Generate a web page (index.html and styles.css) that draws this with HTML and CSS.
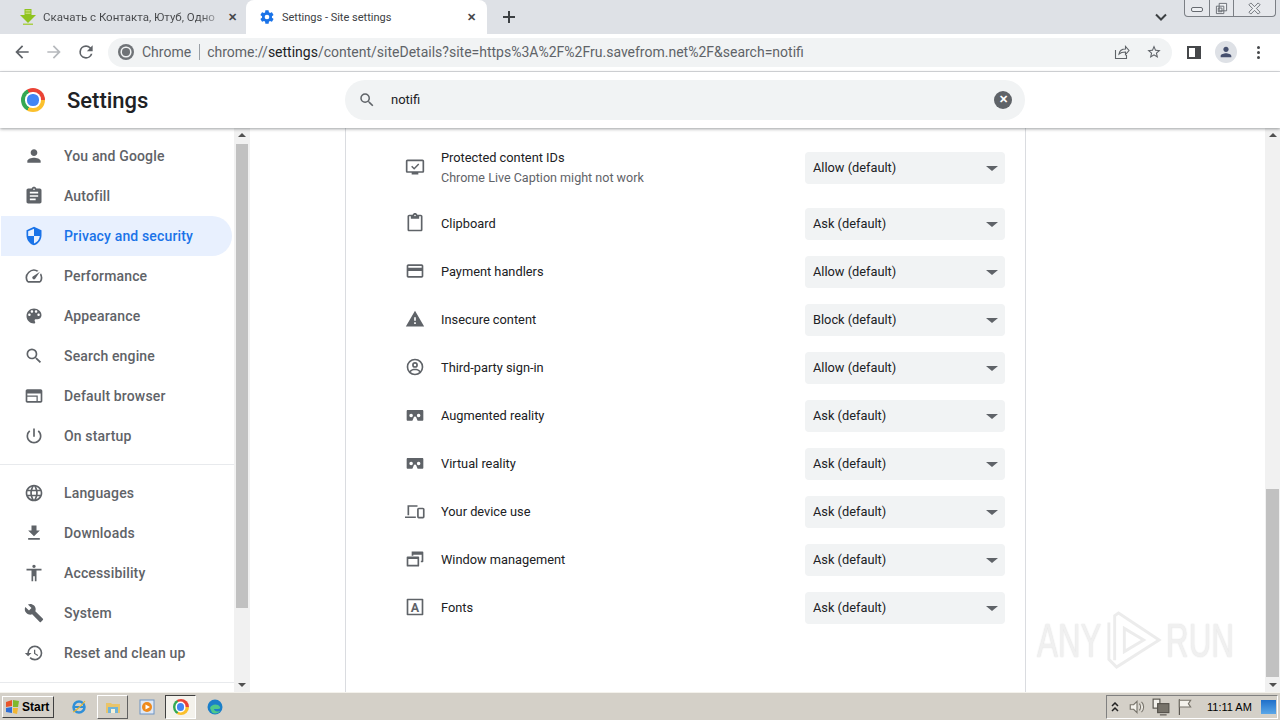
FILE: index.html
```html
<!DOCTYPE html>
<html lang="en">
<head>
    <meta charset="UTF-8">
    <title>Settings - Site settings</title>
    <link rel="stylesheet" href="styles.css">
</head>
<body>
<div class="window">

    <!-- Tabs -->
    <div class="tabstrip">
        <div class="tab">
            <svg class="tab-icon" viewBox="0 0 16 16"><path fill="#8fc31f" d="M4.500 0h7v6H16l-8 8-8-8h4.500z"/><path fill="#c3dc6a" d="M5.500 1h5v1.500h-5zM5.500 3.500h5V5h-5z"/><rect fill="#a9cf4a" x="3" y="14.500" width="10" height="1.500"/></svg>
            <span class="tab-title fade">Скачать с Контакта, Ютуб, Одно</span>
            <span class="tab-close">&#10005;</span>
        </div>
        <div class="tab active">
            <svg class="tab-icon" viewBox="0 0 24 24"><path fill="#1a73e8" d="M19.4 13c.04-.32.1-.66.1-1s-.06-.68-.1-1l2.1-1.65c.2-.15.24-.42.12-.64l-2-3.46c-.12-.22-.38-.3-.6-.22l-2.5 1c-.52-.4-1.08-.73-1.7-.98l-.37-2.65A.49.49 0 0 0 14 2h-4c-.25 0-.46.18-.5.42l-.37 2.65c-.62.25-1.18.58-1.7.98l-2.5-1c-.22-.08-.48 0-.6.22l-2 3.46c-.12.22-.08.49.12.64L4.55 11c-.04.32-.1.66-.1 1s.06.68.1 1l-2.1 1.65c-.2.15-.24.42-.12.64l2 3.46c.12.22.38.3.6.22l2.5-1c.52.4 1.08.73 1.7.98l.37 2.65c.04.24.25.42.5.42h4c.25 0 .46-.18.5-.42l.37-2.65c.62-.25 1.18-.58 1.7-.98l2.5 1c.22.08.48 0 .6-.22l2-3.46c.12-.22.08-.49-.12-.64L19.4 13zM12 15.5a3.5 3.5 0 1 1 0-7 3.5 3.5 0 0 1 0 7z"/></svg>
            <span class="tab-title">Settings - Site settings</span>
            <span class="tab-close">&#10005;</span>
        </div>
        <svg class="new-tab" viewBox="0 0 14 14"><path d="M6 1h2v5h5v2H8v5H6V8H1V6h5z"/></svg>
        <svg class="tab-menu" viewBox="0 0 12 8"><path d="M1 1.5l5 5 5-5" fill="none" stroke="#3c4043" stroke-width="2"/></svg>
        <div class="win-controls">
            <div class="win-btn"><span class="win-min"></span></div>
            <div class="win-btn narrow">
                <svg viewBox="0 0 14 14"><path fill="#eef0f3" stroke="#666a70" d="M4.500 1.500h8v8h-8zM1.500 4.500h8v8h-8z"/><path fill="none" stroke="#666a70" d="M3.500 6.500h4v4h-4z"/></svg>
            </div>
            <div class="win-btn wide">
                <svg viewBox="0 0 14 14"><path fill="#eef0f3" stroke="#666a70" d="M1 3l2-2 4 4 4-4 2 2-4 4 4 4-2 2-4-4-4 4-2-2 4-4z"/></svg>
            </div>
        </div>
    </div>

    <!-- Toolbar -->
    <div class="toolbar">
        <svg class="nav-icon" viewBox="0 0 24 24"><path fill="#5f6368" d="M20 11H7.83l5.59-5.59L12 4l-8 8 8 8 1.41-1.41L7.83 13H20z"/></svg>
        <svg class="nav-icon" viewBox="0 0 24 24"><path fill="#b6b9bd" d="M4 11h12.17l-5.59-5.59L12 4l8 8-8 8-1.41-1.41L16.17 13H4z"/></svg>
        <svg class="nav-icon" viewBox="0 0 24 24"><path fill="#5f6368" d="M17.65 6.35A7.96 7.96 0 0 0 12 4a8 8 0 1 0 7.73 10h-2.08A6 6 0 1 1 12 6c1.66 0 3.14.69 4.22 1.78L13 11h7V4z"/></svg>
        <div class="omnibox">
            <span class="chrome-mark small gray"></span>
            <span class="omni-scheme">Chrome</span>
            <span class="omni-sep"></span>
            <span class="omni-url">chrome://<b>settings</b>/content/siteDetails?site=https%3A%2F%2Fru.savefrom.net%2F&amp;search=notifi</span>
            <svg class="omni-icon" viewBox="0 0 16 16"><path fill="none" stroke="#5f6368" stroke-width="1.1" d="M1.5 6v8.5h11V11M5 10c.5-3 3-5 6.500-5V2.500l3.500 4-3.500 4V8C8.500 8 6.500 8.500 5 10z"/></svg>
            <svg class="omni-icon" viewBox="0 0 24 24"><path fill="#5f6368" d="M22 9.240l-7.190-.620L12 2 9.190 8.630 2 9.240l5.460 4.730L5.820 21 12 17.270 18.180 21l-1.630-7.030L22 9.240zM12 15.400l-3.760 2.270 1-4.280-3.320-2.880 4.380-.38L12 6.100l1.710 4.040 4.380.38-3.320 2.880 1 4.280L12 15.400z"/></svg>
        </div>
        <span class="side-panel"></span>
        <span class="avatar">
            <svg viewBox="0 0 24 24"><path fill="#46506e" d="M12 12c2.210 0 4-1.790 4-4s-1.790-4-4-4-4 1.790-4 4 1.790 4 4 4zm0 2c-2.670 0-8 1.340-8 4v2h16v-2c0-2.660-5.330-4-8-4z"/></svg>
        </span>
        <span class="kebab"><i></i><i></i><i></i></span>
    </div>

    <!-- Cabecalho de Settings -->
    <div class="settings-head">
        <span class="chrome-mark"></span>
        <h1>Settings</h1>
        <div class="search">
            <svg viewBox="0 0 24 24"><path d="M15.500 14h-.790l-.280-.270A6.470 6.470 0 0 0 16 9.500 6.500 6.500 0 1 0 9.500 16c1.610 0 3.090-.590 4.230-1.570l.270.280v.790l5 4.990L20.490 19l-4.990-5zm-6 0C7.010 14 5 11.990 5 9.500S7.010 5 9.500 5 14 7.010 14 9.500 11.990 14 9.500 14z"/></svg>
            <span class="search-text">notifi</span>
            <span class="search-clear">&#10005;</span>
        </div>
    </div>

    <div class="content">
        <!-- Menu lateral -->
        <nav class="sidebar">
            <a class="nav-item"><svg viewBox="0 0 24 24"><path d="M12 12c2.210 0 4-1.790 4-4s-1.790-4-4-4-4 1.790-4 4 1.790 4 4 4zm0 2c-2.670 0-8 1.340-8 4v2h16v-2c0-2.660-5.330-4-8-4z"/></svg>You and Google</a>
            <a class="nav-item"><svg viewBox="0 0 24 24"><path d="M19 3h-4.180C14.400 1.840 13.300 1 12 1c-1.300 0-2.400.840-2.820 2H5c-1.100 0-2 .9-2 2v14c0 1.100.9 2 2 2h14c1.100 0 2-.9 2-2V5c0-1.100-.9-2-2-2zm-7 0c.550 0 1 .450 1 1s-.450 1-1 1-1-.450-1-1 .450-1 1-1zm2 14H7v-2h7v2zm3-4H7v-2h10v2zm0-4H7V7h10v2z"/></svg>Autofill</a>
            <a class="nav-item selected"><svg viewBox="0 0 24 24"><path d="M12 1L3 5v6c0 5.550 3.840 10.740 9 12 5.160-1.260 9-6.450 9-12V5l-9-4zm0 10.990h7c-.530 4.120-3.280 7.790-7 8.940V12H5V6.300l7-3.110v8.800z"/></svg>Privacy and security</a>
            <a class="nav-item"><svg viewBox="0 0 24 24"><path d="M20.380 8.570l-1.230 1.850a8 8 0 0 1-.220 7.580H5.070A8 8 0 0 1 15.580 6.850l1.850-1.230A10 10 0 0 0 3.350 19a2 2 0 0 0 1.720 1h13.850a2 2 0 0 0 1.740-1 10 10 0 0 0-.270-10.440zm-9.790 6.840a2 2 0 0 0 2.830 0l5.660-8.490-8.490 5.660a2 2 0 0 0 0 2.830z"/></svg>Performance</a>
            <a class="nav-item"><svg viewBox="0 0 24 24"><path d="M12 3c-4.970 0-9 4.030-9 9s4.030 9 9 9c.830 0 1.500-.670 1.500-1.500 0-.390-.150-.740-.390-1.010-.230-.260-.380-.610-.380-.990 0-.830.670-1.500 1.500-1.500H16c2.760 0 5-2.240 5-5 0-4.420-4.030-8-9-8zm-5.500 9c-.830 0-1.500-.670-1.500-1.500S5.670 9 6.500 9 8 9.670 8 10.500 7.330 12 6.500 12zm3-4C8.670 8 8 7.330 8 6.500S8.670 5 9.500 5s1.500.670 1.500 1.500S10.330 8 9.500 8zm5 0c-.830 0-1.500-.670-1.500-1.500S13.670 5 14.500 5s1.500.670 1.500 1.500S15.330 8 14.500 8zm3 4c-.830 0-1.500-.670-1.500-1.500S16.670 9 17.500 9s1.500.670 1.500 1.500-.670 1.500-1.500 1.500z"/></svg>Appearance</a>
            <a class="nav-item"><svg viewBox="0 0 24 24"><path d="M15.500 14h-.790l-.280-.270A6.470 6.470 0 0 0 16 9.500 6.500 6.500 0 1 0 9.500 16c1.610 0 3.090-.590 4.230-1.570l.270.280v.790l5 4.990L20.490 19l-4.990-5zm-6 0C7.010 14 5 11.990 5 9.500S7.010 5 9.500 5 14 7.010 14 9.500 11.990 14 9.500 14z"/></svg>Search engine</a>
            <a class="nav-item"><svg viewBox="0 0 24 24"><path d="M20 4H4c-1.100 0-2 .9-2 2v12c0 1.100.9 2 2 2h16c1.100 0 2-.9 2-2V6c0-1.100-.9-2-2-2zM4 18v-5h11v5H4zm11-6.500H4V9h16v9h-3.500V11.500H15z"/></svg>Default browser</a>
            <a class="nav-item"><svg viewBox="0 0 24 24"><path d="M13 3h-2v10h2V3zm4.830 2.170l-1.420 1.420A6.920 6.920 0 0 1 19 12c0 3.870-3.130 7-7 7s-7-3.130-7-7c0-2.190 1.010-4.140 2.580-5.420L6.170 5.170A8.930 8.930 0 0 0 3 12c0 4.970 4.030 9 9 9s9-4.030 9-9c0-2.740-1.230-5.180-3.170-6.830z"/></svg>On startup</a>
            <div class="nav-divider"></div>
            <a class="nav-item"><svg viewBox="0 0 24 24"><path d="M11.990 2C6.470 2 2 6.480 2 12s4.470 10 9.990 10C17.520 22 22 17.520 22 12S17.520 2 11.990 2zm6.930 6h-2.950a15.650 15.650 0 0 0-1.380-3.560A8.030 8.030 0 0 1 18.920 8zM12 4.040c.830 1.200 1.480 2.530 1.910 3.960h-3.820c.430-1.430 1.080-2.760 1.910-3.960zM4.260 14C4.100 13.360 4 12.690 4 12s.1-1.360.26-2h3.380c-.080.660-.140 1.320-.140 2s.060 1.340.140 2H4.260zm.820 2h2.950c.320 1.250.780 2.450 1.380 3.560A7.990 7.990 0 0 1 5.080 16zm2.950-8H5.080a7.990 7.990 0 0 1 4.330-3.560A15.650 15.650 0 0 0 8.030 8zM12 19.960c-.830-1.200-1.480-2.530-1.910-3.960h3.820c-.430 1.430-1.080 2.760-1.910 3.960zM14.340 14H9.660c-.090-.660-.160-1.320-.160-2s.070-1.350.160-2h4.680c.090.650.160 1.320.160 2s-.070 1.340-.160 2zm.250 5.560c.6-1.110 1.060-2.310 1.380-3.560h2.950a8.030 8.030 0 0 1-4.330 3.560zM16.360 14c.080-.660.140-1.320.140-2s-.060-1.340-.140-2h3.380c.160.640.260 1.310.260 2s-.1 1.360-.260 2h-3.380z"/></svg>Languages</a>
            <a class="nav-item"><svg viewBox="0 0 24 24"><path d="M19 9h-4V3H9v6H5l7 7 7-7zM5 18v2h14v-2H5z"/></svg>Downloads</a>
            <a class="nav-item"><svg viewBox="0 0 24 24"><path d="M12 2c1.100 0 2 .9 2 2s-.9 2-2 2-2-.9-2-2 .9-2 2-2zm9 7h-6v13h-2v-6h-2v6H9V9H3V7h18v2z"/></svg>Accessibility</a>
            <a class="nav-item"><svg viewBox="0 0 24 24"><path d="M22.700 19l-9.100-9.100c.9-2.300.4-5-1.500-6.900-2-2-5-2.400-7.400-1.300L9 6 6 9 1.600 4.700C.4 7.100.9 10.100 2.900 12.100c1.900 1.900 4.600 2.400 6.900 1.500l9.100 9.100c.4.4 1 .4 1.400 0l2.300-2.300c.5-.4.5-1.100.1-1.400z"/></svg>System</a>
            <a class="nav-item"><svg viewBox="0 0 24 24"><path d="M13 3a9 9 0 0 0-9 9H1l3.890 3.890.070.140L9 12H6c0-3.870 3.130-7 7-7s7 3.130 7 7-3.130 7-7 7c-1.930 0-3.680-.790-4.940-2.060l-1.420 1.420A8.960 8.960 0 0 0 13 21a9 9 0 0 0 0-18zm-1 5v5l4.280 2.540.720-1.210-3.500-2.080V8H12z"/></svg>Reset and clean up</a>
            <div class="nav-divider bottom"></div>
        </nav>
        <div class="scrollbar side">
            <span class="sb-up"></span>
            <span class="sb-gap-top"></span>
            <span class="sb-thumb"></span>
            <span class="sb-down"></span>
        </div>

        <!-- Lista de permissoes -->
        <main class="main">
            <section class="card">
                <div class="perm tall">
                    <svg viewBox="0 0 24 24"><path d="M21 3H3c-1.100 0-2 .9-2 2v12c0 1.100.9 2 2 2h5v2h8v-2h5c1.100 0 2-.9 2-2V5c0-1.100-.9-2-2-2zm0 14H3V5h18v12z"/><path d="M8 11l3 3 5.500-5.500" fill="none" stroke="#5f6368" stroke-width="1.800"/></svg>
                    <div class="perm-label">Protected content IDs<small>Chrome Live Caption might not work</small></div>
                    <div class="select">Allow (default)<span class="caret"></span></div>
                </div>
                <div class="perm">
                    <svg viewBox="0 0 24 24"><path d="M19 2h-4.180C14.400.840 13.300 0 12 0c-1.300 0-2.400.840-2.820 2H5c-1.100 0-2 .9-2 2v16c0 1.100.9 2 2 2h14c1.100 0 2-.9 2-2V4c0-1.100-.9-2-2-2zm-7 0c.550 0 1 .450 1 1s-.450 1-1 1-1-.450-1-1 .450-1 1-1zm7 18H5V4h2v3h10V4h2v16z"/></svg>
                    <div class="perm-label">Clipboard</div>
                    <div class="select">Ask (default)<span class="caret"></span></div>
                </div>
                <div class="perm">
                    <svg viewBox="0 0 24 24"><path d="M20 4H4c-1.110 0-2 .890-2 2v12c0 1.110.890 2 2 2h16c1.110 0 2-.890 2-2V6c0-1.110-.890-2-2-2zm0 14H4v-6h16v6zm0-10H4V6h16v2z"/></svg>
                    <div class="perm-label">Payment handlers</div>
                    <div class="select">Allow (default)<span class="caret"></span></div>
                </div>
                <div class="perm">
                    <svg viewBox="0 0 24 24"><path d="M1 21h22L12 2 1 21zm12-3h-2v-2h2v2zm0-4h-2v-4h2v4z"/></svg>
                    <div class="perm-label">Insecure content</div>
                    <div class="select">Block (default)<span class="caret"></span></div>
                </div>
                <div class="perm">
                    <svg viewBox="0 0 24 24"><path d="M12 2a10 10 0 1 0 0 20 10 10 0 0 0 0-20zm0 18a7.960 7.960 0 0 1-5.210-1.940C8.120 16.500 10 16 12 16s3.880.5 5.210 2.060A7.960 7.960 0 0 1 12 20zm6.600-3.350C16.900 14.700 14.500 14 12 14s-4.900.7-6.600 2.650A7.960 7.960 0 0 1 4 12c0-4.410 3.590-8 8-8s8 3.590 8 8c0 1.730-.550 3.340-1.400 4.650zM12 6a3.500 3.500 0 1 0 0 7 3.500 3.500 0 0 0 0-7zm0 5a1.500 1.500 0 1 1 0-3 1.500 1.500 0 0 1 0 3z"/></svg>
                    <div class="perm-label">Third-party sign-in</div>
                    <div class="select">Allow (default)<span class="caret"></span></div>
                </div>
                <div class="perm">
                    <svg viewBox="0 0 24 24"><path d="M20.740 6H3.210C2.550 6 2 6.570 2 7.280v10.440c0 .7.550 1.280 1.230 1.280h4.790c.520 0 .960-.330 1.140-.790l1.400-3.480c.230-.590.790-1.010 1.440-1.010s1.210.420 1.450 1.010l1.390 3.480c.190.460.630.790 1.110.790h4.790c.710 0 1.260-.580 1.260-1.280V7.280c0-.710-.550-1.280-1.260-1.280zM7.500 14.620a2.130 2.130 0 1 1 0-4.250 2.130 2.130 0 0 1 0 4.250zm9 0a2.130 2.130 0 1 1 0-4.250 2.130 2.130 0 0 1 0 4.250z"/></svg>
                    <div class="perm-label">Augmented reality</div>
                    <div class="select">Ask (default)<span class="caret"></span></div>
                </div>
                <div class="perm">
                    <svg viewBox="0 0 24 24"><path d="M20.740 6H3.210C2.550 6 2 6.570 2 7.280v10.440c0 .7.550 1.280 1.230 1.280h4.790c.520 0 .960-.330 1.140-.790l1.400-3.480c.230-.590.790-1.010 1.440-1.010s1.210.420 1.450 1.010l1.390 3.480c.190.460.630.790 1.110.790h4.790c.710 0 1.260-.580 1.260-1.280V7.280c0-.710-.550-1.280-1.260-1.280zM7.500 14.620a2.130 2.130 0 1 1 0-4.250 2.130 2.130 0 0 1 0 4.250zm9 0a2.130 2.130 0 1 1 0-4.250 2.130 2.130 0 0 1 0 4.250z"/></svg>
                    <div class="perm-label">Virtual reality</div>
                    <div class="select">Ask (default)<span class="caret"></span></div>
                </div>
                <div class="perm">
                    <svg viewBox="0 0 24 24"><path fill="none" stroke="#5f6368" stroke-width="2" d="M4 17V6h11M0 19.500h13"/><rect x="15.500" y="9" width="7" height="11" rx="1" fill="none" stroke="#5f6368" stroke-width="2"/></svg>
                    <div class="perm-label">Your device use</div>
                    <div class="select">Ask (default)<span class="caret"></span></div>
                </div>
                <div class="perm">
                    <svg viewBox="0 0 24 24"><path d="M8 3h13a1 1 0 0 1 1 1v11a1 1 0 0 1-1 1h-2v-2h1V7H10v1H8z"/><path d="M3 9h13a1 1 0 0 1 1 1v10a1 1 0 0 1-1 1H3a1 1 0 0 1-1-1V10a1 1 0 0 1 1-1zm1 3v7h11v-7z" fill-rule="evenodd"/></svg>
                    <div class="perm-label">Window management</div>
                    <div class="select">Ask (default)<span class="caret"></span></div>
                </div>
                <div class="perm">
                    <svg viewBox="0 0 24 24"><path fill-rule="evenodd" d="M3 2h18a1 1 0 0 1 1 1v18a1 1 0 0 1-1 1H3a1 1 0 0 1-1-1V3a1 1 0 0 1 1-1zm1 2v16h16V4z"/><text x="12" y="18" class="icon-letter">A</text></svg>
                    <div class="perm-label">Fonts</div>
                    <div class="select">Ask (default)<span class="caret"></span></div>
                </div>
            </section>
        </main>
        <div class="scrollbar page">
            <span class="sb-up"></span>
            <span class="sb-gap-page"></span>
            <span class="sb-thumb"></span>
            <span class="sb-down"></span>
        </div>

        <!-- Marca d'agua -->
        <div class="watermark">
            <span>ANY</span>
            <svg viewBox="0 0 60 64"><path fill="none" stroke="#ececec" stroke-width="3" d="M4 14v38l8 8 44-28L14 4l-4 3v46M20 20v24l20-12z"/></svg>
            <span>RUN</span>
        </div>
    </div>

    <!-- Barra de tarefas -->
    <div class="taskbar">
        <div class="start">
            <svg viewBox="0 0 16 16"><path fill="#e8552b" d="M1 3l6-2v6l-6 1z"/><path fill="#7fb82e" d="M8 1l6 1-1 6H8z"/><path fill="#2f6fd6" d="M1 9l6-1v6l-6-1z"/><path fill="#f2b632" d="M8 9h5l-1 6-4-1z"/></svg>
            Start
        </div>
        <div class="task-icon">
            <svg viewBox="0 0 16 16"><circle cx="8" cy="8" r="5.500" fill="none" stroke="#2f8fd8" stroke-width="2.500"/><path d="M3 7h10v2H3z" fill="#2f8fd8"/><path d="M2 13c3-1 9-7 12-11" fill="none" stroke="#e6b62e" stroke-width="1.200"/></svg>
        </div>
        <div class="task-icon raised">
            <svg viewBox="0 0 16 16"><path fill="#e9c46a" d="M1 4h5l1 1h8v9H1z"/><path fill="#6fb3d9" d="M3 8h10v6H3z"/><path fill="#f7f2d8" d="M6 10h4v4H6z"/></svg>
        </div>
        <div class="task-icon">
            <svg viewBox="0 0 16 16"><rect x="1" y="1" width="14" height="14" fill="#dfe8f5" stroke="#6d94c4"/><circle cx="8" cy="8" r="5" fill="#ee8a1d"/><path d="M6.500 5.500L11 8l-4.500 2.500z" fill="#fff"/></svg>
        </div>
        <div class="task-icon pressed"><span class="chrome-mark small"></span></div>
        <div class="task-icon">
            <svg viewBox="0 0 16 16"><circle cx="8" cy="8" r="7.500" fill="#1b7fc9"/><path d="M3 9c1-4 8-5 10-1 .5 1 0 2-2 2H7c0 2 3 3 6 2-2 3-6 3-8 1.500" fill="#4ec98b"/></svg>
        </div>
        <div class="tray">
            <svg class="tray-up" viewBox="0 0 8 10"><path d="M1 4l3-3 3 3M1 9l3-3 3 3" fill="none" stroke="#222" stroke-width="1.500"/></svg>
            <svg viewBox="0 0 16 16"><path d="M2 6h3l3-3v10l-3-3H2zM10 5c1.500 1.500 1.500 4.500 0 6M12 3.500c2.500 2.500 2.500 6.500 0 9" fill="#f4f2ec" stroke="#77736a"/></svg>
            <svg viewBox="0 0 16 16"><rect x="1" y="1" width="6" height="8" fill="#f4f2ec" stroke="#55524b"/><rect x="5" y="5" width="10" height="8" fill="#77736a" stroke="#55524b"/><path d="M7 15h6" stroke="#55524b"/></svg>
            <svg viewBox="0 0 16 16"><path d="M3 1v14" stroke="#55524b"/><path d="M3 2h10l-2 3 2 3H3z" fill="#f4f2ec" stroke="#77736a"/></svg>
            <span class="clock">11:11 AM</span>
            <span class="show-desktop"></span>
        </div>
    </div>
</div>
</body>
</html>
```

FILE: styles.css
```css
/* Estilos gerais */
* {
    box-sizing: border-box;
}

body {
    margin: 0;
    font-family: Roboto, "Liberation Sans", sans-serif;
    font-size: 12.8px;
    color: #202124;
    background: #fff;
}

.window {
    display: flex;
    flex-direction: column;
    width: 1280px;
    height: 720px;
    overflow: hidden;
}

/* Abas */
.tabstrip {
    display: flex;
    align-items: flex-end;
    height: 34px;
    padding-left: 8px;
    background: #dee1e6;
}

.tab {
    display: flex;
    align-items: center;
    width: 238px;
    height: 34px;
    padding: 0 8px 0 12px;
    font-size: 11px;
    color: #45474a;
}

.tab.active {
    width: 241px;
    background: #fff;
    border-radius: 8px 8px 0 0;
    color: #3c4043;
    padding: 0 10px 0 13px;
}

.tab-icon {
    flex: none;
    width: 16px;
    height: 16px;
    margin-right: 7px;
}

.tab-title {
    flex: 1;
    white-space: nowrap;
}

.tab-title.fade {
    font-size: 11.5px;
    color: transparent;
    background: linear-gradient(90deg, #45474a 86%, #dee1e6 100%);
    -webkit-background-clip: text;
    background-clip: text;
}

.tab-close {
    flex: none;
    width: 12px;
    font-size: 11px;
    font-weight: 700;
    color: #45474a;
    text-align: center;
}

.new-tab {
    align-self: center;
    width: 14px;
    height: 14px;
    margin-left: 15px;
    fill: #3c4043;
}

.tab-menu {
    align-self: center;
    width: 12px;
    height: 8px;
    margin-left: 639px;
}

.win-controls {
    display: flex;
    align-self: flex-start;
    height: 17px;
    margin-left: 17px;
    background: #e6e8ec;
    border: 1px solid #7b7f85;
    border-top: 0;
    border-radius: 0 0 4px 4px;
}

.win-btn {
    display: flex;
    align-items: center;
    justify-content: center;
    width: 25px;
    border-right: 1px solid #7b7f85;
}

.win-btn.narrow {
    width: 24px;
}

.win-btn.wide {
    width: 41px;
    border-right: 0;
}

.win-btn svg {
    width: 13px;
    height: 13px;
}

.win-min {
    width: 12px;
    height: 5px;
    margin-top: 3px;
    border: 1px solid #666a70;
    border-radius: 2px;
    background: #eef0f3;
}

/* Barra de endereco */
.toolbar {
    display: flex;
    align-items: center;
    height: 38px;
    padding: 0 11px 1px 12px;
    border-bottom: 1px solid #dadce0;
}

.nav-icon {
    flex: none;
    width: 20px;
    height: 20px;
    margin-right: 12px;
}

.omnibox {
    display: flex;
    align-items: center;
    width: 1064px;
    height: 29px;
    padding: 0 10px 0 10px;
    background: #f1f3f4;
    border-radius: 15px;
    font-size: 14px;
    color: #5f6368;
}

.omni-scheme {
    margin-left: 8px;
}

.omni-sep {
    width: 1px;
    height: 16px;
    margin: 0 7px 0 8px;
    background: #9aa0a6;
}

.omni-url {
    flex: 1;
    white-space: nowrap;
    overflow: hidden;
}

.omni-url b {
    font-weight: 400;
    color: #202124;
}

.omni-icon {
    flex: none;
    width: 16px;
    height: 16px;
    margin-left: 16px;
}

.side-panel {
    flex: none;
    width: 14px;
    height: 13px;
    margin-left: 15px;
    border: 2px solid #45474a;
    border-right-width: 6px;
}

.avatar {
    display: flex;
    flex: none;
    align-items: center;
    justify-content: center;
    width: 22px;
    height: 22px;
    margin-left: 14px;
    background: #dee1e6;
    border-radius: 50%;
}

.avatar svg {
    width: 16px;
    height: 16px;
}

.kebab {
    display: flex;
    flex-direction: column;
    flex: none;
    gap: 2px;
    margin-left: 20px;
}

.kebab i {
    width: 3px;
    height: 3px;
    background: #45474a;
    border-radius: 50%;
}

/* Logo do Chrome */
.chrome-mark {
    position: relative;
    flex: none;
    width: 24px;
    height: 24px;
    border-radius: 50%;
    background: conic-gradient(#ea4335 0 90deg, #fbc02d 90deg 210deg, #34a853 210deg 330deg, #ea4335 330deg);
}

.chrome-mark::after {
    content: "";
    position: absolute;
    inset: 27%;
    border-radius: 50%;
    background: #4285f4;
    box-shadow: 0 0 0 2px #fff;
}

.chrome-mark.small {
    width: 16px;
    height: 16px;
}

.chrome-mark.small::after {
    box-shadow: 0 0 0 1.5px #fff;
}

.chrome-mark.gray {
    background: #6f7377;
}

.chrome-mark.gray::after {
    background: #6f7377;
    box-shadow: 0 0 0 1.5px #f1f3f4;
}

/* Cabecalho */
.settings-head {
    position: relative;
    z-index: 2;
    display: flex;
    align-items: center;
    flex: none;
    height: 56px;
    padding-left: 21px;
    background: #fff;
    box-shadow: 0 1px 3px rgba(60, 64, 67, 0.5);
}

.settings-head h1 {
    width: 278px;
    margin: 0 0 0 22px;
    font-size: 22px;
    font-weight: 500;
    color: #202124;
}

.search {
    display: flex;
    align-items: center;
    width: 680px;
    height: 40px;
    padding: 0 13px;
    background: #f1f3f4;
    border-radius: 20px;
}

.search svg {
    width: 18px;
    height: 18px;
    fill: #5f6368;
}

.search-text {
    flex: 1;
    margin: 0 0 2px 15px;
    font-size: 13px;
}

.search-clear {
    width: 18px;
    height: 18px;
    background: #5f6368;
    border-radius: 50%;
    color: #fff;
    font-size: 11px;
    font-weight: 700;
    line-height: 18px;
    text-align: center;
}

/* Conteudo */
.content {
    position: relative;
    display: flex;
    flex: 1;
    min-height: 0;
}

.sidebar {
    display: flex;
    flex-direction: column;
    flex: none;
    width: 234px;
    padding-top: 8px;
}

.nav-item {
    display: flex;
    align-items: center;
    flex: none;
    height: 40px;
    width: 231px;
    margin-left: 1px;
    padding-left: 23px;
    gap: 20px;
    font-size: 14px;
    font-weight: 500;
    letter-spacing: 0.15px;
    color: #5f6368;
    border-radius: 0 20px 20px 0;
}

.nav-item svg {
    flex: none;
    width: 20px;
    height: 20px;
    fill: #5f6368;
}

.nav-item.selected {
    background: #e8f0fe;
    color: #1a73e8;
}

.nav-item.selected svg {
    fill: #1a73e8;
}

.nav-divider {
    flex: none;
    height: 1px;
    margin: 8px 0 8px;
    background: #e8eaed;
}

.nav-divider.bottom {
    margin-top: 9px;
}

/* Barras de rolagem */
.scrollbar {
    display: flex;
    flex-direction: column;
    flex: none;
    background: #f1f1f1;
}

.scrollbar.side {
    width: 16px;
    padding: 0 2px;
}

.scrollbar.page {
    width: 15px;
    padding: 0 1px;
}

.sb-up,
.sb-down {
    flex: none;
    align-self: center;
    width: 0;
    height: 0;
    margin: 5px 0;
    border-left: 4px solid transparent;
    border-right: 4px solid transparent;
}

.sb-up {
    border-bottom: 4px solid #505050;
}

.sb-down {
    margin-top: auto;
    border-top: 4px solid #505050;
}

.sb-gap-page {
    flex: none;
    height: 347px;
}

.sb-gap-top {
    flex: none;
    height: 2px;
}

.sb-thumb {
    flex: none;
    background: #c1c1c1;
}

.side .sb-thumb {
    height: 464px;
}

.page .sb-thumb {
    height: 188px;
}

/* Cartao de permissoes */
.main {
    flex: 1;
    min-width: 0;
    padding-left: 95px;
}

.card {
    width: 681px;
    height: 100%;
    padding: 8px 20px 0 59px;
    background: #fff;
    border-left: 1px solid #dadce0;
    border-right: 1px solid #dadce0;
}

.perm {
    display: flex;
    align-items: center;
    height: 48px;
}

.perm.tall {
    height: 64px;
}

.perm > svg {
    flex: none;
    width: 20px;
    height: 20px;
    margin: 0 16px 2px 0;
    fill: #5f6368;
}

.icon-letter {
    font-family: Roboto, sans-serif;
    font-size: 15px;
    font-weight: 700;
    text-anchor: middle;
}

.perm-label {
    flex: 1;
    color: #202124;
    line-height: 20px;
}

.perm-label small {
    display: block;
    font-size: 12.55px;
    color: #5f6368;
}

.select {
    display: flex;
    align-items: center;
    justify-content: space-between;
    flex: none;
    width: 200px;
    height: 32px;
    padding: 0 7px 2px 8px;
    background: #f1f3f4;
    border-radius: 4px;
    color: #202124;
}

.caret {
    width: 0;
    height: 0;
    margin-top: 2px;
    border-left: 6px solid transparent;
    border-right: 6px solid transparent;
    border-top: 5px solid #5f6368;
}

/* Marca d'agua */
.watermark {
    position: absolute;
    left: 1037px;
    top: 481px;
    display: flex;
    align-items: center;
    color: #f0f0f0;
    font-family: "Liberation Sans", sans-serif;
    font-size: 49px;
    text-shadow: 0 0 2px #dcdcdc;
    pointer-events: none;
}

.watermark span {
    display: inline-block;
    width: 68px;
    transform: scaleX(0.64);
    transform-origin: left center;
    white-space: nowrap;
}

.watermark svg {
    width: 58px;
    height: 62px;
    margin-right: 3px;
}

/* Barra de tarefas */
.taskbar {
    display: flex;
    align-items: center;
    flex: none;
    height: 28px;
    padding: 1px 2px 0;
    background: #d4d0c8;
    border-top: 1px solid #f4f2ec;
    font-family: "Liberation Sans", sans-serif;
}

.start {
    display: flex;
    align-items: center;
    gap: 1px;
    width: 52px;
    height: 22px;
    padding-left: 2px;
    background: #d4d0c8;
    border: 1px solid;
    border-color: #fff #404040 #404040 #fff;
    font-size: 12px;
    font-weight: 700;
    color: #000;
}

.start svg {
    width: 16px;
    height: 16px;
}

.task-icon {
    display: flex;
    align-items: center;
    justify-content: center;
    flex: none;
    width: 31px;
    height: 24px;
    margin-left: 3px;
}

.task-icon:nth-child(2) {
    margin-left: 9px;
}

.task-icon svg {
    width: 16px;
    height: 16px;
}

.task-icon.raised {
    border: 1px solid;
    border-color: #fff #606060 #606060 #fff;
}

.task-icon.pressed {
    background: #f4f2ec;
    border: 1px solid;
    border-color: #404040 #fff #fff #404040;
}

.tray {
    display: flex;
    align-items: center;
    gap: 6px;
    width: 172px;
    height: 24px;
    margin-left: auto;
    padding-left: 4px;
    border: 1px solid;
    border-color: #808080 #fff #fff #808080;
    font-size: 11px;
    color: #000;
}

.tray svg {
    flex: none;
    width: 18px;
    height: 18px;
}

.tray .tray-up {
    width: 8px;
    height: 10px;
    margin-right: 3px;
}

.clock {
    margin-left: 7px;
    white-space: nowrap;
}

.show-desktop {
    flex: none;
    width: 15px;
    height: 14px;
    margin-left: 3px;
    background: linear-gradient(#1f6fc9, #5aa7e8);
}
```
